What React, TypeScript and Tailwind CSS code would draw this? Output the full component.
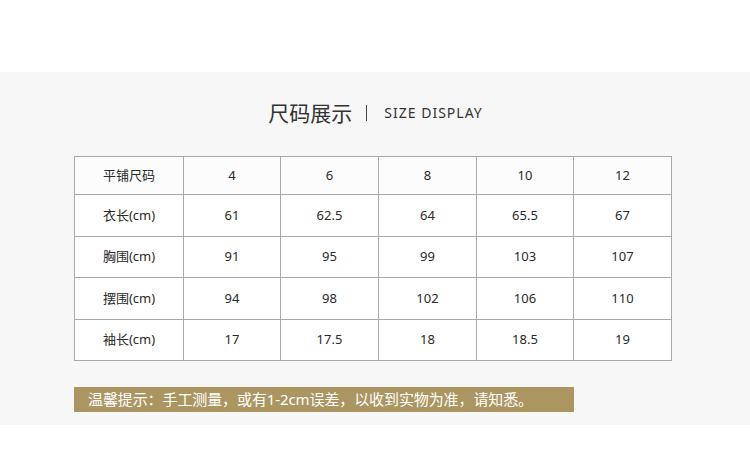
export default function App() {
    const cols = ["4", "6", "8", "10", "12"]
    const rows = [
        { label: "衣长(cm)", vals: ["61", "62.5", "64", "65.5", "67"], h: "h-[42px]" },
        { label: "胸围(cm)", vals: ["91", "95", "99", "103", "107"], h: "h-[41px]" },
        { label: "摆围(cm)", vals: ["94", "98", "102", "106", "110"], h: "h-[42px]" },
        { label: "袖长(cm)", vals: ["17", "17.5", "18", "18.5", "19"], h: "h-[41px]" },
    ]
    const widths = ["w-[109px]", "w-[97px]", "w-[98px]", "w-[98px]", "w-[97px]", "w-[98px]"]

    return (
        <div className="w-[750px] h-[456px] bg-white font-['Noto_Sans','Noto_Sans_CJK_SC',sans-serif]">
            <div className="h-[72px]" />
            <div className="bg-[#f7f7f7] h-[353px] pt-[29px] flex flex-col items-center">
                <div className="h-[24px] flex items-center text-[#333] pl-[1px]">
                    <span className="text-[21px] leading-none">尺码展示</span>
                    <span className="ml-[14px] mr-[17px] w-px h-[16px] bg-[#444]" />
                    <span className="text-[14px] tracking-[1px] leading-none">SIZE DISPLAY</span>
                </div>

                <table className="self-start ml-[74px] mt-[31px] table-fixed border-collapse bg-white text-[13px] text-[#2a2a2a] w-[597px]">
                    <colgroup>
                        {widths.map((w, i) => <col key={i} className={w} />)}
                    </colgroup>
                    <tbody>
                        <tr className="h-[38px] bg-[#fcfcfc]">
                            <td className="border border-[#a9a9a9] text-center">平铺尺码</td>
                            {cols.map((c) => (
                                <td key={c} className="border border-[#a9a9a9] text-center">{c}</td>
                            ))}
                        </tr>
                        {rows.map((r) => (
                            <tr key={r.label} className={r.h}>
                                <td className="border border-[#a9a9a9] text-center">{r.label}</td>
                                {r.vals.map((v, i) => (
                                    <td key={i} className="border border-[#a9a9a9] text-center">{v}</td>
                                ))}
                            </tr>
                        ))}
                    </tbody>
                </table>

                <div className="self-start ml-[74px] mt-[26px] w-[500px] h-[25px] bg-[#ab9661] text-white text-[15px] leading-[25px] pl-[14px] tracking-[-0.1px]">
                    温馨提示：手工测量，或有1-2cm误差，以收到实物为准，请知悉。
                </div>
            </div>
        </div>
    )
}
